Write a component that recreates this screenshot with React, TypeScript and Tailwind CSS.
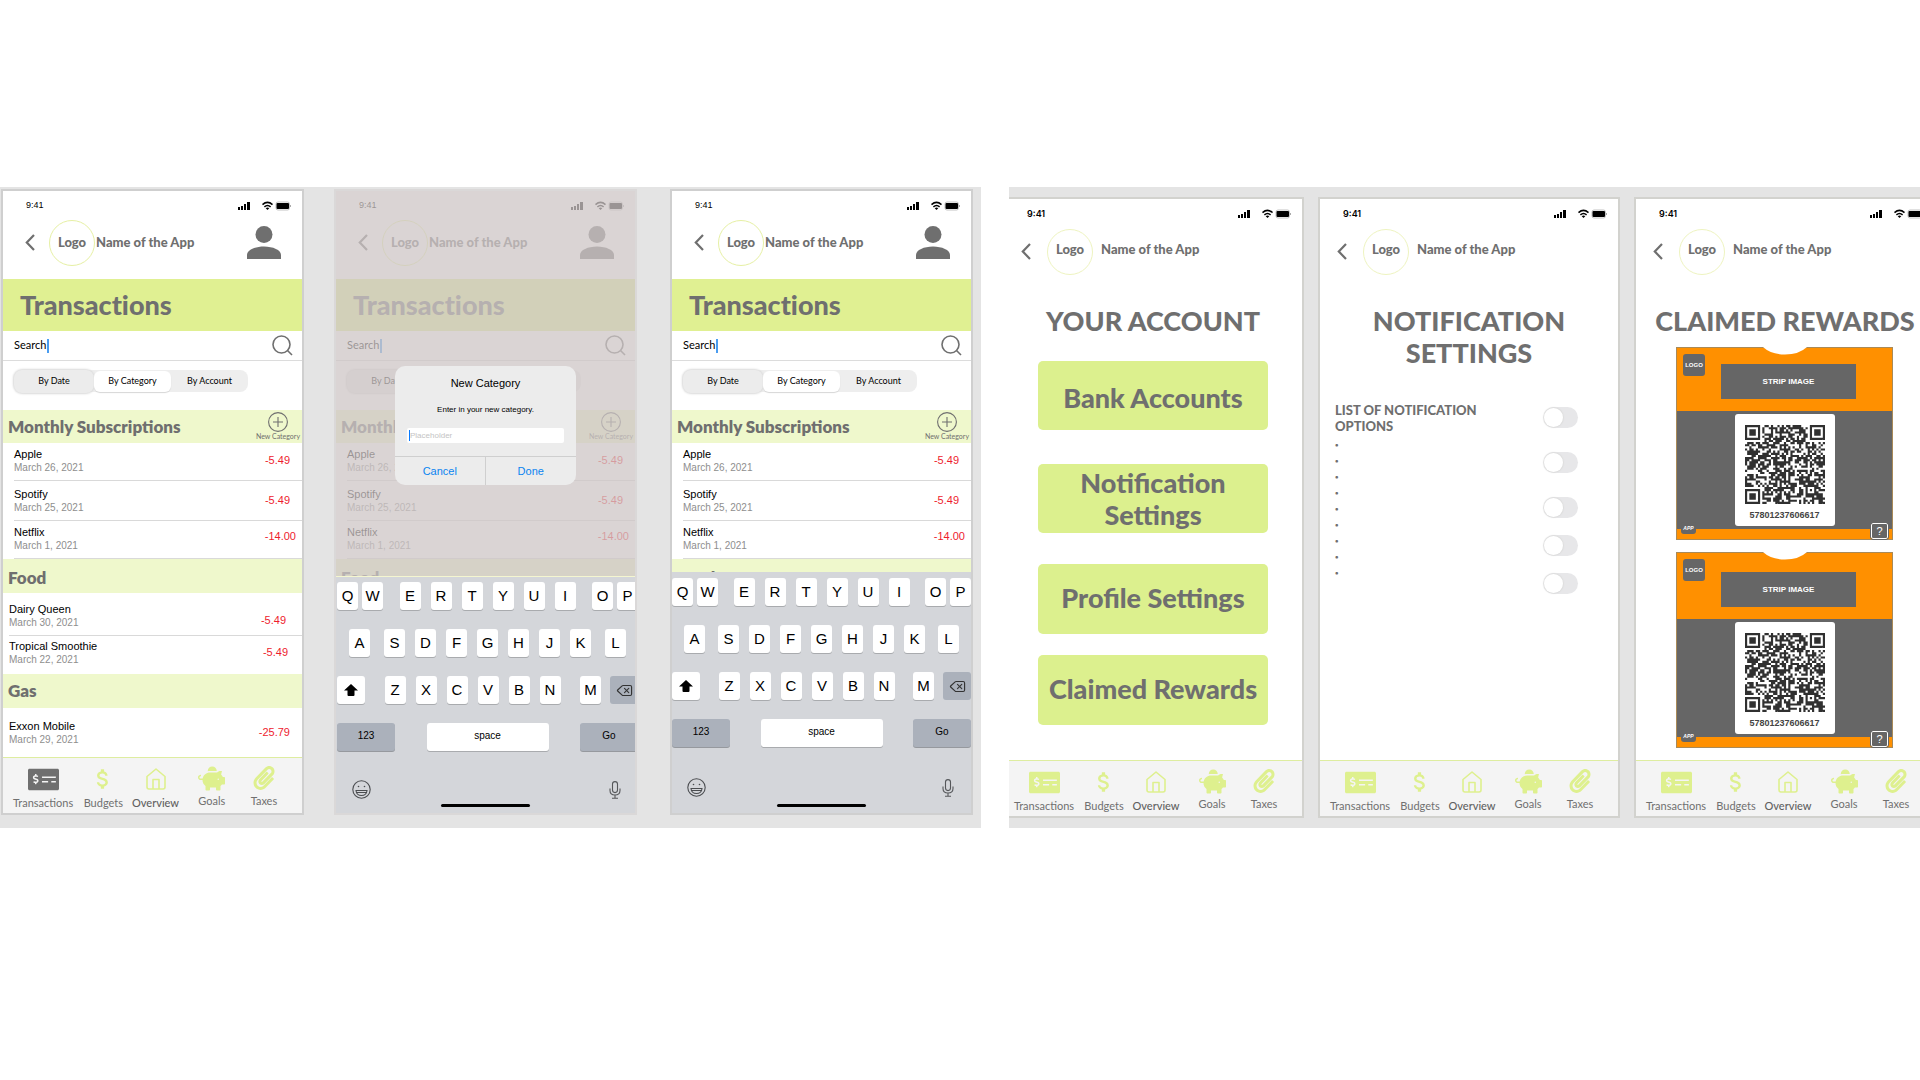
import React from "react";
import { FaMoneyCheckAlt, FaPiggyBank, FaPaperclip } from "react-icons/fa";
import { MdAttachMoney } from "react-icons/md";
import { Delete } from "lucide-react";

/* ---------- shared pieces ---------- */

function StatusBar({ bold = false }: { bold?: boolean }) {
  return (
    <div className={bold ? "flex h-7 items-center justify-between pl-[23px] pr-[11px]" : "flex h-7 items-center justify-between pl-[23px] pr-[11px] pt-[2px]"}>
      <span
        className={
          bold
            ? "font-[Inter,sans-serif] text-[9px] font-semibold text-black"
            : "font-['Liberation_Sans',sans-serif] text-[9px] text-black"
        }
      >
        9:41
      </span>
      <svg width="53" height="10" viewBox="0 0 53 10" aria-hidden="true">
        <rect x="0" y="6" width="2" height="3" />
        <rect x="3" y="5" width="2" height="4" />
        <rect x="6" y="3" width="2" height="6" />
        <rect x="9" y="1" width="3" height="8" />
        <g fill="none" stroke="#000" strokeWidth="1.5">
          <path d="M24.5 3.6 Q29.5 -0.8 34.5 3.6" />
          <path d="M26.4 5.9 Q29.5 3.2 32.6 5.9" />
        </g>
        <path d="M27.7 7.2 Q29.5 5.8 31.3 7.2 L29.5 9 Z" />
        <rect x="38" y="1" width="13.500" height="8" rx="2" fill="none" stroke="#aaa" strokeWidth="0.7" />
        <rect x="38.500" y="2" width="12.500" height="6" rx="1" />
        <rect x="52" y="4" width="1" height="2" fill="#aaa" />
      </svg>
    </div>
  );
}

function AppHeader({ wide = false, avatar = false }: { wide?: boolean; avatar?: boolean }) {
  return (
    <header className={wide ? "flex h-[47px] items-center pl-[17px]" : "flex h-[47px] items-center pl-[22px]"}>
      <button type="button" aria-label="Back">
        <svg width="10" height="17" viewBox="0 0 10 17" fill="none" stroke="#6f6f6f" strokeWidth="2.2">
          <path d="M9 1 L1.800 8.500 L9 16" />
        </svg>
      </button>
      <span
        className={
          wide
            ? "ml-4 flex size-[46px] items-center justify-center rounded-full border border-[#eef4c0] pb-[3px] text-[13px] font-black"
            : "ml-[14px] flex size-[46px] items-center justify-center rounded-full border border-[#e6f0a4] text-[13px] font-black"
        }
      >
        Logo
      </span>
      <span className={wide ? "ml-2 pb-[3px] text-[13px] font-black" : "ml-px text-[13px] font-black"}>Name of the App</span>
      {avatar && (
        <svg className="ml-auto mr-[21px]" width="34" height="33" viewBox="0 0 34 33" fill="#6f6f6f" role="img" aria-label="Profile">
          <circle cx="17" cy="8.500" r="8.500" />
          <path d="M0 33 V29 C0 24 8 20.500 17 20.500 C26 20.500 34 24 34 29 V33 Z" />
        </svg>
      )}
    </header>
  );
}

function HomeIcon() {
  return (
    <svg width="20" height="22" viewBox="0 0 20 22" fill="none" stroke="currentColor" strokeWidth="1.6" strokeLinejoin="round">
      <path d="M1 8.5 L10 1 L19 8.5 V19 Q19 21 17 21 H3 Q1 21 1 19 Z" />
      <path d="M7 21 V11.5 H13 V21" />
    </svg>
  );
}

function TabBar({ active = false }: { active?: boolean }) {
  return (
    <nav className="mt-auto grid h-14 shrink-0 grid-cols-[minmax(0,60fr)_minmax(0,60fr)_minmax(0,44fr)_minmax(0,68fr)_minmax(0,36fr)] border-t border-[#deedA0] bg-[#f4f4f4] pl-[10px] pr-5 text-[11px] leading-[14px] text-[#707070]">
      <a href="#transactions" className="flex flex-col items-center whitespace-nowrap pt-1">
        <span className={active ? "flex h-[34px] items-center text-[#6f6f6f]" : "flex h-[34px] items-center text-[#def08e]"}>
          <FaMoneyCheckAlt size={31} />
        </span>
        Transactions
      </a>
      <a href="#budgets" className="flex flex-col items-center whitespace-nowrap pt-1">
        <span className="flex h-[34px] items-center text-[#def08e]">
          <MdAttachMoney size={26} />
        </span>
        Budgets
      </a>
      <a href="#overview" className="flex flex-col items-center whitespace-nowrap pt-1 font-medium text-[#606060]">
        <span className="flex h-[34px] items-center text-[#def08e]">
          <HomeIcon />
        </span>
        Overview
      </a>
      <a href="#goals" className="flex flex-col items-center whitespace-nowrap pt-1">
        <span className="flex h-8 items-center text-[#def08e]">
          <FaPiggyBank size={27} />
        </span>
        Goals
      </a>
      <a href="#taxes" className="flex flex-col items-center whitespace-nowrap pt-1">
        <span className="flex h-8 items-center text-[#def08e]">
          <FaPaperclip size={24} />
        </span>
        Taxes
      </a>
    </nav>
  );
}

/* ---------- transactions screens ---------- */

type Tx = { name: string; date: string; amount: string; row: string; amountClass: string };

const monthly: Tx[] = [
  { name: "Apple", date: "March 26, 2021", amount: "-5.49", row: "ml-[11px] h-[38px] border-b pt-1", amountClass: "pr-3 pb-px" },
  { name: "Spotify", date: "March 25, 2021", amount: "-5.49", row: "ml-[11px] h-10 border-b pt-[6px]", amountClass: "pr-3 pb-[2px]" },
  { name: "Netflix", date: "March 1, 2021", amount: "-14.00", row: "ml-[11px] h-[38px] border-b pt-1", amountClass: "pr-[6px] pb-[5px]" },
];
const food: Tx[] = [
  { name: "Dairy Queen", date: "March 30, 2021", amount: "-5.49", row: "ml-[6px] h-[43px] border-b pt-[9px]", amountClass: "pr-4 pt-2" },
  { name: "Tropical Smoothie", date: "March 22, 2021", amount: "-5.49", row: "ml-[6px] h-[38px] pt-[3px]", amountClass: "pr-[14px] pb-[2px]" },
];
const gas: Tx[] = [
  { name: "Exxon Mobile", date: "March 29, 2021", amount: "-25.79", row: "ml-[6px] h-[49px] pt-[11px]", amountClass: "pr-3 pb-[2px]" },
];

function TxList({ items }: { items: Tx[] }) {
  return (
    <ul className="font-['Liberation_Sans',sans-serif]">
      {items.map((t) => (
        <li key={t.name} className={`flex items-start justify-between border-[#d9d9d9] ${t.row}`}>
          <div>
            <p className="text-[11px] leading-[14px] text-black">{t.name}</p>
            <p className="text-[10px] leading-[14px] text-[#8e8e8e]">{t.date}</p>
          </div>
          <div className={`flex h-7 items-center text-[11px] text-[#ee1c2e] ${t.amountClass}`}>{t.amount}</div>
        </li>
      ))}
    </ul>
  );
}

function TransactionsContent({ id, full = false }: { id: string; full?: boolean }) {
  return (
    <>
      <StatusBar />
      <AppHeader avatar />
      <h1 className="mt-[13px] flex h-[52px] items-center bg-[#e0f092] pl-[17px] text-[27px] font-black leading-8 [font-variant-ligatures:none]">Transactions</h1>
      <form className="flex h-[30px] items-center border-b border-[#dcdcdc] pl-[11px] pr-[9px]">
        <label htmlFor={`search-${id}`} className="text-[11px] text-black">Search</label>
        <span className="ml-px h-[14px] w-[2px] bg-[#4a9df0]" />
        <input id={`search-${id}`} type="text" className="min-w-0 flex-1 bg-transparent text-[11px] outline-none" />
        <svg width="21" height="21" viewBox="0 0 21 21" fill="none" stroke="#6f6f6f" strokeWidth="1.6" aria-hidden="true">
          <circle cx="9.5" cy="9.5" r="8.5" />
          <path d="M15.5 15.5 L20 20" />
        </svg>
      </form>
      <div className="ml-[11px] mr-[54px] mt-[9px] flex h-[22px] items-center rounded-lg bg-[#eeeeee] text-[9px] text-black">
        <button type="button" className="h-[23px] flex-[80] rounded-lg bg-[#ececec] shadow-[0_0_2px_1px_#dadada]">By Date</button>
        <button type="button" className="h-[21px] flex-[77] rounded-md bg-white shadow-[0_1px_1px_#d6d6d6]">By Category</button>
        <button type="button" className="flex-[77]">By Account</button>
      </div>
      <section>
        <div className="mt-[18px] flex h-[33px] items-center justify-between bg-[#eff8cc] pl-[5px] pr-[2px]">
          <h2 className="text-[17px] font-extrabold">Monthly Subscriptions</h2>
          <button type="button" className="flex flex-col items-center text-[7px] leading-[9px]">
            <svg width="20" height="20" viewBox="0 0 20 20" fill="none" stroke="#6f6f6f" strokeWidth="1.1" aria-hidden="true">
              <circle cx="10" cy="10" r="9.4" />
              <path d="M10 5 V15 M5 10 H15" />
            </svg>
            New Category
          </button>
        </div>
        <TxList items={monthly} />
      </section>
      <section>
        <h2 className="flex h-[34px] items-center bg-[#eff8cc] pl-[5px] pt-1 text-[17px] font-extrabold">Food</h2>
        {full && <TxList items={food} />}
      </section>
      {full && (
        <section>
          <h2 className="flex h-[34px] items-center bg-[#eff8cc] pl-[5px] text-[17px] font-extrabold">Gas</h2>
          <TxList items={gas} />
        </section>
      )}
    </>
  );
}

function Keys({ letters }: { letters: string }) {
  return (
    <>
      {letters.split("").map((l) => (
        <button key={l} type="button" className="h-7 w-[21px] rounded-[3px] bg-white text-center text-[15px] leading-7 shadow-[0_1px_0_#a9abae]">
          {l}
        </button>
      ))}
    </>
  );
}

function Keyboard({ shifted = false }: { shifted?: boolean }) {
  return (
    <div
      className={
        shifted
          ? "flex h-[236px] shrink-0 flex-col overflow-hidden bg-[#d4d6da] pt-[5px] font-['Liberation_Sans',sans-serif] text-black"
          : "flex h-[241px] shrink-0 flex-col overflow-hidden bg-[#d4d6da] pt-[6px] font-['Liberation_Sans',sans-serif] text-black"
      }
    >
      <div className={shifted ? "-mr-[3px] ml-px flex flex-col gap-[19px]" : "flex flex-col gap-[19px]"}>
        <div className="flex justify-between">
          <div className="flex gap-1"><Keys letters="QW" /></div>
          <div className="flex gap-[10px]"><Keys letters="ERTYUI" /></div>
          <div className="flex gap-1"><Keys letters="OP" /></div>
        </div>
        <div className="flex justify-between px-3">
          <Keys letters="A" />
          <div className="flex gap-[10px]"><Keys letters="SDFGHJK" /></div>
          <Keys letters="L" />
        </div>
        <div className="flex justify-between">
          <button type="button" aria-label="Shift" className="flex h-7 w-7 items-center justify-center rounded-[3px] bg-white shadow-[0_1px_0_#a9abae]">
            <svg width="14" height="12" viewBox="0 0 14 12"><path d="M7 0 L14 6.5 H10.5 V11 Q10.5 12 9.5 12 H4.5 Q3.5 12 3.5 11 V6.5 H0 Z" /></svg>
          </button>
          <div className="flex gap-[10px]"><Keys letters="ZXCVBN" /></div>
          <div className="flex gap-[9px]">
            <Keys letters="M" />
            <button type="button" aria-label="Delete" className="flex h-7 w-7 items-center justify-center rounded-[3px] bg-[#abb1bb] text-[#333]">
              <Delete size={17} strokeWidth={1.6} />
            </button>
          </div>
        </div>
        <div className="flex justify-between text-[10px]">
          <button type="button" className="h-7 w-[58px] rounded-[3px] bg-[#abb1bb] pb-1 shadow-[0_1px_0_#96999e]">123</button>
          <button type="button" className="h-7 w-[122px] rounded-[3px] bg-white pb-1 shadow-[0_1px_0_#a9abae]">space</button>
          <button type="button" className="h-7 w-[58px] rounded-[3px] bg-[#abb1bb] pb-1 shadow-[0_1px_0_#96999e]">Go</button>
        </div>
      </div>
      <div className={shifted ? "mt-[29px] flex items-center justify-between pl-4 pr-[14px]" : "mt-[31px] flex items-center justify-between pl-[15px] pr-[17px]"}>
        <svg width="19" height="19" viewBox="0 0 19 19" fill="none" stroke="#4b4d50" strokeWidth="1.1">
          <circle cx="9.5" cy="9.5" r="8.7" />
          <path d="M4 10.5 H15 Q14.5 15.5 9.5 15.5 Q4.5 15.5 4 10.5 Z M4.6 12.5 H14.4" />
          <circle cx="6.5" cy="6.5" r="0.8" fill="#4b4d50" stroke="none" />
          <circle cx="12.5" cy="6.5" r="0.8" fill="#4b4d50" stroke="none" />
        </svg>
        <svg width="12" height="18" viewBox="0 0 12 18" fill="none" stroke="#55575a" strokeWidth="1.1">
          <rect x="3.5" y="0.6" width="5" height="11" rx="2.5" />
          <path d="M1 7.5 V9.5 Q1 14 6 14 Q11 14 11 9.5 V7.5 M6 14 V17 M3 17.3 H9" />
        </svg>
      </div>
      <div className="mx-auto mb-[6px] mt-auto h-[3px] w-[89px] rounded-full bg-black" />
    </div>
  );
}

function NewCategoryDialog() {
  return (
    <div className="absolute inset-x-0 top-[175px] flex justify-center">
      <div role="dialog" aria-label="New Category" className="w-[181px] rounded-[10px] bg-[#ececec] font-['Liberation_Sans',sans-serif] text-black">
        <p className="pt-[10px] text-center text-[11px] leading-[14px]">New Category</p>
        <label htmlFor="category" className="mt-[14px] block text-center text-[8px] leading-[12px]">Enter in your new category.</label>
        <div className="mx-3 mt-3 flex h-[15px] items-center rounded-[2px] bg-white pl-[2px]">
          <span className="h-[11px] w-px bg-[#0a7cff]" />
          <input id="category" type="text" placeholder="Placeholder" className="w-full bg-transparent text-[8px] outline-none placeholder:text-[#c4c4c4]" />
        </div>
        <div className="mt-[13px] grid grid-cols-2 border-t border-[#cfcfcf] text-[11px] text-[#0a84f0]">
          <button type="button" className="h-7 border-r border-[#cfcfcf]">Cancel</button>
          <button type="button" className="h-7">Done</button>
        </div>
      </div>
    </div>
  );
}

/* ---------- account screens ---------- */

const toggles = ["mt-0", "mt-6", "mt-6", "mt-[17px]", "mt-[17px]"];

function AccountScreen() {
  return (
    <>
      <h1 className="mt-[30px] text-center text-[27px] font-black leading-8">YOUR ACCOUNT</h1>
      <div className="mx-[34px] mt-6 flex flex-col text-[27px] font-black leading-8">
        <button type="button" className="h-[69px] rounded-[5px] bg-[#dcf08e] pt-1">Bank Accounts</button>
        <button type="button" className="mt-[34px] h-[69px] rounded-[5px] bg-[#dcf08e] px-8">Notification Settings</button>
        <button type="button" className="mt-[31px] h-[70px] rounded-[5px] bg-[#dcf08e] pb-[2px]">Profile Settings</button>
        <button type="button" className="mt-[21px] h-[70px] whitespace-nowrap rounded-[5px] bg-[#dcf08e] pb-[2px]">Claimed Rewards</button>
      </div>
    </>
  );
}

function NotificationScreen() {
  return (
    <>
      <h1 className="mx-auto mt-[30px] w-56 text-center text-[27px] font-black leading-8">NOTIFICATION SETTINGS</h1>
      <div className="mt-[33px] flex justify-between pl-[15px] pr-10">
        <div className="w-[160px]">
          <h2 id="options" className="text-[13px] font-black leading-4">LIST OF NOTIFICATION OPTIONS</h2>
          <ul className="mt-[3px] text-[6px] font-bold leading-4">
            {Array.from({ length: 9 }, (_, i) => (
              <li key={i}>•</li>
            ))}
          </ul>
        </div>
        <div className="mt-[5px] flex flex-col">
          {toggles.map((gap, i) => (
            <label key={i} className={`flex h-[21px] w-[34px] items-center rounded-full bg-[#e7e7e9] ${gap}`}>
              <input
                type="checkbox"
                role="switch"
                aria-label={`Notification option ${i + 1}`}
                className="size-[19px] appearance-none rounded-full bg-white shadow-[0_0_1px_1px_#dddddd] checked:translate-x-[15px]"
              />
            </label>
          ))}
        </div>
      </div>
    </>
  );
}

/* 37×37 code symbol: finder squares, an alignment square, and seeded data modules. */
function codePath() {
  const n = 37;
  let seed = 578012;
  let d = "";
  const ring = (x: number, y: number, cx: number, cy: number) => Math.max(Math.abs(x - cx), Math.abs(y - cy));
  for (let y = 0; y < n; y++) {
    for (let x = 0; x < n; x++) {
      seed = (seed * 1103515245 + 12345) % 2147483648;
      let on = seed / 2147483648 > 0.42;
      for (const [cx, cy] of [[3, 3], [33, 3], [3, 33]]) {
        const r = ring(x, y, cx, cy);
        if (r <= 4) on = r === 3 || r <= 1;
      }
      const a = ring(x, y, 30, 30);
      if (a <= 2) on = a !== 1;
      if (on) d += `M${x} ${y}h1v1h-1z`;
    }
  }
  return d;
}
const CODE = codePath();

function Pass({ tall = false }: { tall?: boolean }) {
  return (
    <article className="border border-[#a98a58] bg-[#666666] font-['Liberation_Sans',sans-serif] text-white">
      <div className={tall ? "relative h-[66px] bg-[#ff9000] pt-[19px]" : "relative h-[63px] bg-[#ff9000] pt-4"}>
        <svg className="absolute -top-px left-1/2 -translate-x-1/2" width="44" height="8" viewBox="0 0 44 8" aria-hidden="true">
          <path d="M0 0 Q8 7.5 22 7.5 Q36 7.5 44 0 Z" fill="#fff" />
        </svg>
        <span className="absolute left-[6px] top-[6px] flex size-[22px] items-center justify-center rounded-[3px] bg-[#666666] text-[6px] font-bold">LOGO</span>
        <div className="ml-11 mr-9 flex h-[35px] items-center justify-center bg-[#666666] pt-px text-[8px] font-bold">STRIP IMAGE</div>
      </div>
      <div className="mx-auto mb-[3px] mt-[3px] flex h-[112px] w-[100px] flex-col items-center rounded-[3px] bg-white pt-[11px] text-[#444]">
        <svg width="80" height="79" viewBox="0 0 37 37" preserveAspectRatio="none" fill="#303030" role="img" aria-label="Reward code">
          <path d={CODE} />
        </svg>
        <span className="mt-[5px] text-[9px] font-bold leading-3">57801237606617</span>
      </div>
      <div className="relative h-[10px] bg-[#ff9000]">
        <span className="absolute -top-[7px] left-1 flex h-3 w-[15px] items-center justify-center rounded-[3px] bg-[#666666] text-[5px] font-bold italic leading-none">APP</span>
        <button type="button" aria-label="Help" className="absolute -top-[6px] right-1 flex h-4 w-[17px] items-center justify-center rounded-[2px] border border-white bg-[#666666] text-[11px] leading-none outline outline-[#666666]">?</button>
      </div>
    </article>
  );
}

function RewardsScreen() {
  return (
    <>
      <h1 className="mt-[30px] whitespace-nowrap text-center text-[27px] font-black leading-8">CLAIMED REWARDS</h1>
      <div className="ml-10 mr-[41px] mt-[10px] flex flex-col gap-3">
        <Pass />
        <Pass tall />
      </div>
    </>
  );
}

function AccountPhone({ children }: { children: React.ReactNode }) {
  return (
    <div className="flex min-w-0 flex-1 flex-col border-2 border-[#d2d2ce] bg-white pt-px">
      <StatusBar bold />
      <AppHeader wide />
      {children}
      <TabBar />
    </div>
  );
}

export default function App() {
  return (
    <main className="grid min-h-screen w-full grid-cols-[minmax(0,981fr)_minmax(0,911fr)] content-start gap-7 overflow-hidden bg-white pt-[187px] font-[Lato,sans-serif] text-[#6f6f6f]">
      <div className="flex bg-[#e4e4e4] pb-[13px] pl-px pr-2 pt-[2px]">
        <div className="flex min-w-0 flex-1 flex-col border-2 border-[#cfcfcf] bg-white">
          <TransactionsContent id="all" full />
          <TabBar active />
        </div>
        <div className="ml-[30px] flex min-w-0 flex-1 flex-col border-2 border-[#dad8d8] bg-white">
          <div className="relative h-0 grow overflow-hidden">
            <TransactionsContent id="new" />
            <div className="absolute inset-0 border-b border-[#f4f6d0] bg-[#cec6c5]/75" />
            <NewCategoryDialog />
          </div>
          <Keyboard shifted />
        </div>
        <div className="ml-[33px] flex min-w-0 flex-1 flex-col border-2 border-[#cfcfcf] bg-white">
          <div className="h-0 grow overflow-hidden">
            <TransactionsContent id="typing" />
          </div>
          <Keyboard />
        </div>
      </div>
      <div className="flex flex-col overflow-hidden bg-[#e4e4e4] py-[10px]">
        <div className="-ml-[7px] -mr-4 flex grow gap-[14px]">
          <AccountPhone><AccountScreen /></AccountPhone>
          <AccountPhone><NotificationScreen /></AccountPhone>
          <AccountPhone><RewardsScreen /></AccountPhone>
        </div>
      </div>
    </main>
  );
}
